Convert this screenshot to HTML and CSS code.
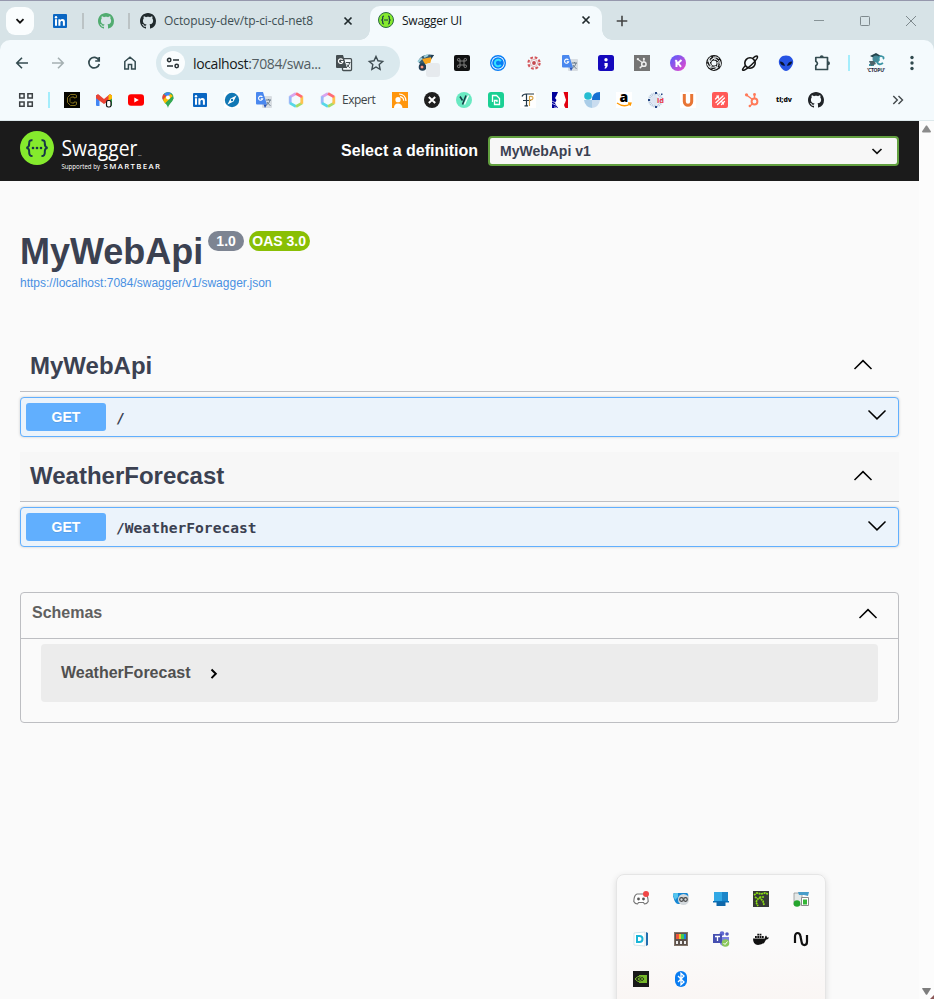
FILE: index.html
```html
<!DOCTYPE html>
<html lang="en">
<head>
<meta charset="utf-8">
<title>Swagger UI</title>
<link rel="stylesheet" href="styles.css">
</head>
<body>
<svg class="defs" aria-hidden="true">
  <symbol id="github" viewBox="0 0 16 16"><path fill="currentColor" d="M8 0C3.58 0 0 3.58 0 8c0 3.54 2.29 6.53 5.47 7.59.4.07.55-.17.55-.38 0-.19-.01-.82-.01-1.49-2.01.37-2.53-.49-2.69-.94-.09-.23-.48-.94-.82-1.13-.28-.15-.68-.52-.01-.53.63-.01 1.08.58 1.23.82.72 1.21 1.87.87 2.33.66.07-.52.28-.87.51-1.07-1.78-.2-3.64-.89-3.64-3.95 0-.87.31-1.59.82-2.15-.08-.2-.36-1.02.08-2.12 0 0 .67-.21 2.2.82.64-.18 1.32-.27 2-.27s1.36.09 2 .27c1.53-1.04 2.2-.82 2.2-.82.44 1.1.16 1.92.08 2.12.51.56.82 1.27.82 2.15 0 3.07-1.87 3.75-3.65 3.95.29.25.54.73.54 1.48 0 1.07-.01 1.93-.01 2.2 0 .21.15.46.55.38A8.01 8.01 0 0 0 16 8c0-4.42-3.58-8-8-8z"/></symbol>
  <symbol id="linkedin" viewBox="0 0 16 16"><rect x="1" y="1" width="14" height="14" rx="1" fill="#0a66c2"/><path fill="#fff" d="M3 6.3h2v6.500H3zM6.4 6.3h1.900v.9c.4-.7 1.100-1.100 2.100-1.100 1.900 0 2.500 1.200 2.500 3v3.700h-2V9.500c0-.9-.2-1.600-1.100-1.600s-1.400.6-1.400 1.600v3.300h-2z"/><circle cx="4" cy="4.200" r="1.200" fill="#fff"/></symbol>
  <symbol id="translate" viewBox="0 0 16 16"><rect x="6" y="4" width="10" height="12" rx="1" fill="#d8dde2"/><path d="M1 0h6l4 12.500H1a1 1 0 0 1-1-1V1a1 1 0 0 1 1-1z" fill="#4a88ef"/><path d="M7.500 12.500H11L9 16z" fill="#2954b8"/><path d="M10 8h5M12.500 7v1M14 8c-.5 2.500-2 4-3.500 5M11 10c1 2 2 2.500 3.500 3.500" stroke="#66798b" fill="none"/><path d="M6.400 5A2.100 2.100 0 1 0 6.700 6.700H4.800" stroke="#fff" fill="none" stroke-width="1.100"/></symbol>
  <symbol id="hexring" viewBox="0 0 16 16"><g fill="none" stroke-width="2.800"><path d="M8 1.500 2 4.900" stroke="#d9a5ee"/><path d="M2.200 4.200v7.500" stroke="#9ab8f8"/><path d="m2 11.100 6 3.400" stroke="#55d8e8"/><path d="m8 14.500 6-3.400" stroke="#a6dc66"/><path d="M13.800 11.800V4.200" stroke="#ffc24f"/><path d="M14 4.900 8 1.500" stroke="#ff6b75"/></g></symbol>
  <symbol id="hubspot" viewBox="0 0 16 16"><g fill="none" stroke="currentColor" stroke-width="1.500"><circle cx="10.500" cy="9.500" r="2.900" stroke-width="2"/><path d="M10.500 6.800V2.500M8.500 7.500 2.500 3M8.700 11.500 6 14"/></g><g fill="currentColor"><circle cx="10.500" cy="2.500" r="1.400"/><circle cx="2.500" cy="2.800" r="1.600"/><circle cx="5.800" cy="14" r="1.200"/></g></symbol>
  <symbol id="close" viewBox="0 0 16 16"><path d="m4.500 4.500 7 7m0-7-7 7" fill="none" stroke="currentColor" stroke-width="1.700"/></symbol>
  <symbol id="arrow-up" viewBox="0 0 20 12"><path d="m1.500 10 8.500-8.400 8.500 8.400" fill="none" stroke="#000" stroke-width="1.500"/></symbol>
  <symbol id="arrow-down" viewBox="0 0 20 12"><path d="m1.500 1.500 8.500 8.400 8.500-8.400" fill="none" stroke="#000" stroke-width="1.500"/></symbol>
</svg>

<header class="browser">
  <div class="tabs">
    <button class="tab-search"><svg class="ic"><path d="m4.500 6.200 3.500 3.500 3.500-3.500" fill="none" stroke="#111" stroke-width="1.800"/></svg></button>
    <svg class="ic pinned"><use href="#linkedin"/></svg>
    <i class="tab-sep"></i>
    <svg class="ic green"><use href="#github"/></svg>
    <i class="tab-sep"></i>
    <div class="tab"><svg class="ic"><use href="#github"/></svg><span class="tab-title repo">Octopusy-dev/tp-ci-cd-net8</span><svg class="ic"><use href="#close"/></svg></div>
    <div class="tab active"><svg class="ic" viewBox="0 0 16 16"><circle cx="8" cy="8" r="7.500" fill="#85ea2d" stroke="#2c6b45"/><path d="M6 4Q4.500 4 4.700 6T3.200 8Q4.900 8 4.700 10T6 12M10 4q1.500 0 1.300 2T12.800 8q-1.700 0-1.500 2T10 12M6 8h4" fill="none" stroke="#173647" stroke-width="1.200"/></svg><span class="tab-title">Swagger UI</span><svg class="ic"><use href="#close"/></svg></div>
    <svg class="ic plus"><path d="M8 2.700v10.600M2.700 8h10.600" stroke="#444" stroke-width="1.600"/></svg>
    <div class="window-controls">
      <svg class="ic"><path d="M3 7.500h10" stroke="#879397"/></svg>
      <svg class="ic"><rect x="3.500" y="3.500" width="9" height="9" rx=".8" fill="none" stroke="#7e898d"/></svg>
      <svg class="ic"><path d="m3 3 10 10M13 3 3 13" stroke="#7e898d"/></svg>
    </div>
  </div>

  <div class="toolbar">
    <svg class="ic"><path d="M14 8H3M8 2.800 2.800 8 8 13.200" fill="none" stroke="#344b50" stroke-width="1.600"/></svg>
    <svg class="ic"><path d="M2 8h11M8 2.800 13.200 8 8 13.200" fill="none" stroke="#a5b0b2" stroke-width="1.600"/></svg>
    <svg class="ic"><path d="M12.800 5A5.300 5.300 0 1 0 13.300 9M13.200 2v4H9.200" fill="none" stroke="#344b50" stroke-width="1.700"/></svg>
    <svg class="ic"><path d="M2.800 14V6.500L8 2.200l5.200 4.300V14H9.600V9.500H6.400V14z" fill="none" stroke="#344b50" stroke-width="1.500"/></svg>
    <div class="omnibox">
      <span class="site-info"><svg class="ic"><g fill="none" stroke="#273034" stroke-width="1.500"><circle cx="4.200" cy="5" r="1.700"/><path d="M8 5h6M2 11h6"/><circle cx="11.700" cy="11" r="1.700"/></g></svg></span>
      <span class="url">localhost<em>:7084/swa...</em></span>
      <svg class="ic"><rect x="6.500" y="3.700" width="9" height="11.800" rx="1" fill="#f4fafd" stroke="#454e51" stroke-width="1.300"/><path d="M1 0h6l4 13H1a1 1 0 0 1-1-1V1a1 1 0 0 1 1-1z" fill="#454e51"/><path d="M6.600 4.800A2.300 2.300 0 1 0 7 6.500H5" stroke="#fff" fill="none" stroke-width="1.200"/><path d="M10 7.500h4.500M13.500 8c-.5 2.500-2 4-3.500 5M11 9.500c1 2 2 2.500 3 3.500" stroke="#454e51" fill="none"/></svg>
      <svg class="ic"><path d="m8 1.500 2 4.300 4.700.6-3.500 3.200.9 4.700L8 12l-4.100 2.300.9-4.700L1.300 6.400l4.700-.6z" fill="none" stroke="#3d4b50" stroke-width="1.400"/></svg>
    </div>
    <div class="extensions">
      <svg class="ic over"><path d="M0 6Q4-2 16 0L10 9H2z" fill="#355a70"/><path d="M4 4 14 2l-2 7H7z" fill="#f7a51e"/><path d="m6 2 4-2M0 7l4-4" stroke="#9ed0db" stroke-width="2"/><path d="M13 0h3l-3 4z" fill="#223d54"/><circle cx="4.500" cy="12" r="3.800" fill="#223d54"/><circle cx="4" cy="12" r="1.600" fill="#ed6344"/><circle cx="4" cy="12" r=".7" fill="#fff"/><rect x="8" y="8" width="14" height="14" rx="3" fill="#e6eaee"/></svg>
      <svg class="ic"><rect width="16" height="16" rx="2" fill="#101112"/><path d="M6 6h4v4H6zM6 6H5a1.300 1.300 0 1 1 1-1zM10 6V5a1.300 1.300 0 1 1 1 1zM6 10v1a1.300 1.300 0 1 1-1-1zM10 10h1a1.300 1.300 0 1 1-1 1z" fill="none" stroke="#888" stroke-width=".9"/></svg>
      <svg class="ic"><circle cx="8" cy="8" r="7.300" fill="#fff" stroke="#087df5" stroke-width="1.400"/><circle cx="8" cy="8" r="5.800" fill="#087df5"/><path d="M10.800 6.200A3.200 3.200 0 1 0 10.800 9.800" fill="none" stroke="#35e0ff" stroke-width="2"/></svg>
      <svg class="ic"><circle cx="8" cy="8" r="5.600" fill="none" stroke="#d3575c" stroke-width="2.200" stroke-dasharray="2.700 1.700"/><circle cx="8" cy="8" r="1.900" fill="#c54a50"/><circle cx="8" cy="8" r="3.600" fill="none" stroke="#dfa0a2" stroke-width=".8"/></svg>
      <svg class="ic"><use href="#translate"/></svg>
      <svg class="ic"><rect width="16" height="16" rx="2.500" fill="#1509bd"/><circle cx="8" cy="4.800" r="1.700" fill="#fff"/><path d="M6.500 8h3.200v3L8 13.500H6.400L7.500 11h-1z" fill="#fff"/></svg>
      <svg class="ic hs-gray"><rect width="16" height="16" fill="#747474"/><use href="#hubspot" x="2" y="2" width="12" height="12"/></svg>
      <svg class="ic"><defs><linearGradient id="kg" x1="0" x2="1" y2="1"><stop stop-color="#515bff"/><stop offset="1" stop-color="#ee4ac8"/></linearGradient></defs><circle cx="8" cy="8" r="8" fill="url(#kg)"/><path d="M5.300 5.200l1.200 1V12M11.500 5 7 9M8 8l3 3.800" stroke="#fff" stroke-width="2" fill="none"/></svg>
      <svg class="ic"><circle cx="8" cy="8" r="7.900" fill="#111"/><g fill="none" stroke="#f4fafd" stroke-width="1"><path id="blade" d="M8 4.200Q12 4 13.500 8.500M7 2.200Q10 1 13 3.500"/><use href="#blade" transform="rotate(72 8 8)"/><use href="#blade" transform="rotate(144 8 8)"/><use href="#blade" transform="rotate(216 8 8)"/><use href="#blade" transform="rotate(288 8 8)"/></g><circle cx="8" cy="8" r="2.600" fill="#f4fafd"/></svg>
      <svg class="ic"><circle cx="8" cy="8" r="5.200" fill="none" stroke="#111" stroke-width="1.600"/><path d="M3.500 10.500C0 14-.5 16 2.500 15 6 13.500 13 7 15 3.500 16.500.500 14.500 0 11 3" fill="none" stroke="#111" stroke-width="1.500"/></svg>
      <svg class="ic"><path d="M8 .5C3 .5.800 4 .8 7c0 4 4.500 9 7.200 9s7.200-5 7.200-9C15.200 4 13 .5 8 .5z" fill="#2653e4"/><path d="M1.800 6.500q4 0 5.300 4.300Q2.800 11 1.800 6.500zM14.200 6.500q-4 0-5.300 4.300 4.300.2 5.300-4.300z" fill="#08132e"/></svg>
      <svg class="ic"><path d="M1.800 2.500h11.700V14.500H1.800v-3.700q3.200-2.300 0-4.600z" fill="none" stroke="#344b50" stroke-width="1.700" stroke-linejoin="round"/><path d="M5.700 2.200a2 2 0 0 1 4 0zM14 6.200a2 2 0 0 1 0 4z" fill="#344b50"/></svg>
      <i class="bar-sep"></i>
      <svg class="ic avatar" viewBox="0 0 18 20"><path d="M3 3 9 0l5 3-5 3z" fill="#24444d"/><circle cx="9" cy="6" r="3.500" fill="#468998"/><path d="M2 12h5m1-4-4 4m6-3q2 4 6 1m-4-2q-2-4 2-5 4 1 2 3" fill="none" stroke="#3a94a4" stroke-width="1.800"/><path d="M2 8h5l2 3-5 2z" fill="#50636a"/><text x="0" y="18.500" font-size="5" font-weight="700" textLength="18" font-family="Open Sans" fill="#223">'CTOPU'</text></svg>
      <svg class="ic"><g fill="#30494e"><circle cx="8" cy="2.500" r="1.700"/><circle cx="8" cy="8" r="1.700"/><circle cx="8" cy="13.500" r="1.700"/></g></svg>
    </div>
  </div>

  <nav class="bookmarks">
    <svg class="ic"><g fill="none" stroke="#3d4144" stroke-width="1.500"><path d="M1.700 1.700h4.400v4.400H1.700zM9.900 1.700h4.400v4.400H9.900zM1.700 9.900h4.400v4.400H1.700zM9.900 9.900h4.400v4.400H9.900z"/></g></svg>
    <i class="bar-sep"></i>
    <svg class="ic"><rect width="16" height="16" fill="#050500"/><path d="M12.500 5.500V3.300L11 2.500H6.500l-3 3v5l3 3H11l1.500-1V10H10v1H7.500L6 9.500v-3L7.500 5H10v1z" fill="none" stroke="#8f7b1d" stroke-width=".9"/></svg>
    <svg class="ic"><path d="M0 3h3.500v11H1q-1 0-1-1z" fill="#4285f4"/><path d="M12.500 3H16v10q0 1-1 1h-2.500z" fill="#34a853"/><path d="M0 3.500 2 2l6 5 6-5 2 1.500v2.700L8 12 0 6.200z" fill="#ea4335"/><path d="m12.500 3.300 1.500-1 2 1.200v3l-3.500 2.200z" fill="#fbbc04"/><rect x="10.500" y="8.500" width="4.500" height="6.500" rx="1.700" fill="#fff" stroke="#111" stroke-width="1.200"/></svg>
    <svg class="ic"><rect y="2.300" width="16" height="11.500" rx="3" fill="#f00"/><path d="m6.300 5.500 4.500 2.500-4.500 2.600z" fill="#fff"/></svg>
    <svg class="ic"><path d="M8 0a5.500 5.500 0 0 0-5.500 5.500C2.500 10 7 11 8 16c1-5 5.500-6 5.500-10.500A5.500 5.500 0 0 0 8 0z" fill="#34a853"/><path d="M3.700 2A5.500 5.500 0 0 0 3 8L7 4.600z" fill="#ea4335"/><path d="m3 8 6-7 4 3-8 7.500z" fill="#fbbc04"/><path d="M9 1q3 .5 4 3L5 11.500l4 1 4.500-6L12 2z" fill="#34a853"/><path d="M4 2q3-3 7-1L7.500 5z" fill="#4285f4"/><circle cx="8" cy="5.500" r="2" fill="#fff"/></svg>
    <svg class="ic"><use href="#linkedin"/></svg>
    <svg class="ic"><rect width="16" height="16" fill="#fff"/><circle cx="8" cy="8" r="7.200" fill="#1278b5"/><path d="M12.500 3.500 9.500 9.500l-6 3 3-6z" fill="#fff"/><circle cx="8" cy="8" r="1.200" fill="#1278b5"/></svg>
    <svg class="ic"><use href="#translate"/></svg>
    <svg class="ic"><use href="#hexring"/></svg>
    <span class="folder"><svg class="ic"><use href="#hexring"/></svg>Expert</span>
    <svg class="ic"><rect width="16" height="16" fill="#ff960d"/><circle cx="6" cy="7.700" r="2.600" fill="#fff"/><path d="M2 16q0-4.500 4-4.500t4.500 4.500z" fill="#fff"/><path d="M7 2q6.500 0 7 7M8 4.700q3.500.5 3.700 4" fill="none" stroke="#fff" stroke-width="1.200"/></svg>
    <svg class="ic"><circle cx="8" cy="8" r="8" fill="#1f1f1f"/><path d="m4.800 5 6.400 6M11.200 5l-6.400 6" stroke="#fff" stroke-width="2"/></svg>
    <svg class="ic"><circle cx="8" cy="8" r="8" fill="#69e9c2"/><path d="m4 4.500 2.500 4M10 3.500 6.500 12.500" stroke="#163d46" stroke-width="1.600"/><path d="M12.500 3.500 8.500 12.500" stroke="#fff" stroke-width="1.300"/></svg>
    <svg class="ic"><rect width="16" height="16" rx="3" fill="#1ad094"/><path d="M4.500 10V3.500h4L11.500 6.500v6H6.500V8.500H9v1.500" fill="none" stroke="#fff" stroke-width="1.300"/></svg>
    <svg class="ic"><rect width="16" height="16" fill="#fff"/><path d="M2 4.500q1-2.500 4-2.500h8M6.500 14V2M3 8.500h8M4.500 13.800h3.500" fill="none" stroke="#233847" stroke-width="1.200"/><path d="M9.500 14V4.500q3.500-.5 3.500 1.500t-3 2" fill="none" stroke="#d7a347" stroke-width="1.100"/></svg>
    <svg class="ic"><path fill="#fff" d="M0 0h16v16H0z"/><path d="M0 0h6L4.500 3.500 3 6l1.500 2L3 11l3 5H0z" fill="#00009b"/><path d="M11.500 0H16v16h-2.500q-2.500-3-.500-5l1-3-1-3z" fill="#e1000f"/><path d="m0 9 4 2M0 11.500l5 2M2 15l3 .5" stroke="#fff" stroke-width=".7"/></svg>
    <svg class="ic"><path d="M0 8h8v8Q1 15 0 8z" fill="#aacde8"/><path d="M8 8h8q-1 7-8 8z" fill="#c9dcef"/><circle cx="4" cy="4" r="3.800" fill="#25bdd1"/><path d="M8 8q0-8 8-8v8z" fill="#1770d2"/></svg>
    <svg class="ic"><rect width="16" height="16" fill="#fff"/><text x="3.500" y="10" font-size="14" font-weight="800" font-family="Open Sans">a</text><path d="M1 11q7 5 13 1M12 11l3 .2-1 2.600" fill="none" stroke="#ff9900" stroke-width="1.300"/></svg>
    <svg class="ic"><circle cx="7.500" cy="8" r="6" fill="none" stroke="#b7c8de" stroke-width="3" stroke-dasharray="1 .7"/><circle cx="7" cy="8" r="4" fill="#dde5f2"/><path d="M0 7h2v2H0zM7 0h2v2H7zM7 14h2v2H7zM13 1.500h1.500V3H13z" fill="#244582"/><text x="9" y="11" font-size="7.500" font-weight="700" font-family="Open Sans" fill="#ed3546">id</text></svg>
    <svg class="ic"><rect width="16" height="16" fill="#fff"/><path d="M4.300 2v7.500a3.700 3.700 0 0 0 7.400 0V2" fill="none" stroke="#e87535" stroke-width="3"/></svg>
    <svg class="ic"><rect width="16" height="16" rx="2" fill="#ff5957"/><g stroke="#fff" stroke-width="1.300" stroke-linecap="round"><path d="m3.500 7 3-3M4 10.500l7-6.500M5.500 12.500l7-6.500M9.500 12.500l3-3M5 4l1.500 2M10 10l1.500 2"/></g></svg>
    <svg class="ic hs-orange"><use href="#hubspot"/></svg>
    <svg class="ic"><text x="0" y="10" font-size="7" font-weight="800" textLength="16" lengthAdjust="spacingAndGlyphs" font-family="Open Sans" fill="#101010">tl;dv</text></svg>
    <svg class="ic dark"><use href="#github"/></svg>
    <svg class="ic more"><path d="m3.300 4 4 4-4 4M8.500 4l4 4-4 4" fill="none" stroke="#42484b" stroke-width="1.400"/></svg>
  </nav>
</header>

<div class="viewport">
  <main>
    <div class="topbar">
      <svg class="logo" viewBox="0 0 142 42">
        <circle cx="17" cy="17" r="17" fill="#85ea2d"/>
        <path d="M12.500 9.200Q9 8.700 9.200 12.200T6.500 17Q9.400 17.200 9.200 21.200T12.500 25M21.500 9.200q3.500-.5 3.300 3t2.700 4.800q-2.900.2-2.700 4.200t-3.300 3.800" fill="none" stroke="#173647" stroke-width="2"/>
        <g fill="#173647"><circle cx="13" cy="17" r="1.300"/><circle cx="17" cy="17" r="1.300"/><circle cx="21" cy="17" r="1.300"/></g>
        <g font-family="Open Sans" fill="#fff"><text x="41.500" y="24.500" font-size="22.500" textLength="80" lengthAdjust="spacingAndGlyphs">Swagger<tspan font-size="2.500" dx="1">TM</tspan></text><text x="41.500" y="37.500" font-size="6.300" textLength="38.500" lengthAdjust="spacingAndGlyphs">Supported by</text><text x="83.500" y="38.300" font-size="7.800" font-weight="600" textLength="56.500" lengthAdjust="spacing">SMARTBEAR</text></g>
      </svg>
      <div class="definition"><label>Select a definition</label><div class="select"><span>MyWebApi v1</span><svg class="ic"><path d="m3.500 6 4.500 4.300L12.500 6" fill="none" stroke="#111" stroke-width="1.700"/></svg></div></div>
    </div>

    <section class="info">
      <h1>MyWebApi</h1><span class="badge">1.0</span><span class="badge oas">OAS 3.0</span>
    </section>
    <a class="spec-link">https://localhost:7084/swagger/v1/swagger.json</a>

    <section class="group">
      <h2>MyWebApi<svg class="arrow"><use href="#arrow-up"/></svg></h2>
      <div class="operation"><b>GET</b><code>/</code><svg class="arrow"><use href="#arrow-down"/></svg></div>
    </section>
    <section class="group hovered">
      <h2>WeatherForecast<svg class="arrow"><use href="#arrow-up"/></svg></h2>
      <div class="operation"><b>GET</b><code>/WeatherForecast</code><svg class="arrow"><use href="#arrow-down"/></svg></div>
    </section>

    <section class="schemas">
      <h3>Schemas<svg class="arrow"><use href="#arrow-up"/></svg></h3>
      <div class="model">WeatherForecast<svg class="ic"><path d="m5.500 4.500 4.300 4.300-4.300 4.300" fill="none" stroke="#000" stroke-width="2"/></svg></div>
    </section>
  </main>
  <aside class="scrollbar">
    <svg viewBox="0 0 15 12"><path d="M3 9.500 7 3.500h1l4 6q0 1-1 1H4q-1 0-1-1z" fill="#8b8b8b"/></svg>
    <svg viewBox="0 0 15 12"><path d="M3 1.500q0-.5 1-.5h7q1 0 1 .5l-4 6.200H7z" fill="#7d7d7d"/><path d="m11 12 4-4v4z" fill="#8c5757"/></svg>
  </aside>
</div>

<div class="tray">
  <svg class="ic"><path d="M4 3h8q3 1 3.200 7.500Q14 13 11.500 13l-1-1.500h-5l-1 1.500Q2 13 .8 10.500 1 4 4 3z" fill="#fff" stroke="#777" stroke-width="1.200"/><circle cx="5.500" cy="8" r="1.400" fill="#555"/><circle cx="10.500" cy="8" r="1.400" fill="#555"/><circle cx="13" cy="3" r="3" fill="#f04747"/></svg>
  <svg class="ic"><path d="M1 2h13q2 1 1 5l-5 6H5Q2 13 0 5q0-3 1-3z" fill="#1687d4"/><path d="M0 4q0-2 2-2h3v4L2 9z" fill="#55c5ee"/><circle cx="10.500" cy="8.500" r="5.500" fill="#d2d8dc"/><g fill="none" stroke="#444" stroke-width="1.200"><circle cx="8.500" cy="8.500" r="1.800"/><circle cx="12.500" cy="8.500" r="1.800"/></g></svg>
  <svg class="ic"><path d="M1 1h14v9H1z" fill="#31a8e5"/><path d="M9 1h6v9H9z" fill="#1b85c9"/><path d="M0 10h16v1.500H0z" fill="#0870b8"/><path d="M3.500 11h9v4h-9z" fill="#1068aa"/></svg>
  <svg class="ic"><rect width="16" height="16" fill="#363a36"/><path d="m1 4 3-2 4 1 4-1 3 1M2 6l3 2-2 3 2 4M11 6 6 6l4 4 1 4" fill="none" stroke="#8bdf12" stroke-width="1.700" stroke-dasharray="2 .6"/></svg>
  <svg class="ic"><path d="M1 2h8v12H1z" fill="#e4e8e7" stroke="#888" stroke-width=".7"/><path d="M5 1h11l-1 4-4-1H6z" fill="#489dc9"/><path d="M8.500 6.500h7v8h-7z" fill="#fff" stroke="#8b8b8b"/><path d="M10 8.500h4v5h-4z" fill="#34b637"/><circle cx="4" cy="12.500" r="3.300" fill="#25a52d"/></svg>
  <svg class="ic"><path d="m1 2 11-1v14L1 14z" fill="#fff" stroke="#bed8e2" stroke-width=".7"/><path d="m13 1 2 1v12l-2 1z" fill="#216cad"/><path d="M4 5h2.500a3 3 0 0 1 0 6H4z" fill="none" stroke="#19b5d7" stroke-width="2"/></svg>
  <svg class="ic"><rect x="1.500" y="1.500" width="13" height="13" fill="#5b514b" stroke="#827569"/><path d="M3 3h3v5H3z" fill="#ef533b"/><path d="M6 3h2v5H6z" fill="#f4c324"/><path d="M8 3h3v5H8z" fill="#42c951"/><path d="M11 3h2v5h-2z" fill="#1583dc"/><path d="M3 10h2v3H3zM7 10h2v3H7zM11 10h2v3h-2z" fill="#eee"/></svg>
  <svg class="ic"><circle cx="9" cy="2.500" r="2.300" fill="#6068d2"/><circle cx="14" cy="3" r="1.800" fill="#5059bd"/><path d="M7 6h9v6q-4 6-9 1z" fill="#7c82e1"/><rect y="3" width="9" height="9" fill="#4650b1"/><path d="M2 5.500h5M4.500 5.500V10" stroke="#fff" stroke-width="1.300"/><circle cx="12.500" cy="12" r="3.800" fill="#8bc75b"/><path d="m10.500 12 1.500 1.500 2.500-3" fill="none" stroke="#fff"/></svg>
  <svg class="ic"><path d="M0 7.500h12q-.5-2 1-3 1 1 1 2h2q-.5 2-3 2.200Q11 14 5 14 0 14 0 7.500zM2 5h1.800v1.900H2zM4.300 5h1.800v1.900H4.300zM6.600 5h1.800v1.900H6.600zM4.300 2.700h1.800v1.800H4.300zM6.600 2.700h1.800v1.800H6.600zM8.900 5h1.800v1.900H8.900z" fill="#111"/></svg>
  <svg class="ic"><path d="M2 12V5.500C2 .8 7 .8 7.500 5.500l1 5c.5 4.700 5.500 4.700 5.500 0V4" fill="none" stroke="#111" stroke-width="2.200"/></svg>
  <svg class="ic"><rect width="16" height="16" fill="#191919"/><path d="M6 4h8v8H6z" fill="#76b82a"/><path d="M2 8q5-6 10 0-5 6-10 0zM5 8q2-3 5 0-3 3-5 0z" fill="#263018" stroke="#76b82a"/></svg>
  <svg class="ic"><rect x="2" width="12" height="16" rx="6" fill="#087cf1"/><path d="m5 5 6 6-3 2.700V2.300L11 5l-6 6" fill="none" stroke="#fff" stroke-width="1.300"/></svg>
</div>
</body>
</html>
```

FILE: styles.css
```css
* { box-sizing: border-box; }
body { margin: 0; width: 934px; height: 999px; overflow: hidden; position: relative; background: #fafafa; font-family: "Liberation Sans", Arial, sans-serif; color: #3b4151; }
h1, h2, h3 { margin: 0; }
.defs { position: absolute; width: 0; height: 0; }
.ic { width: 16px; height: 16px; flex: none; display: block; overflow: visible; }
.dark { color: #202428; }

.browser { height: 121px; background: #d7e3e7; border-top: 1px solid #9698ad; font-family: "Open Sans", "Noto Sans", sans-serif; }
.tabs { height: 39px; display: flex; align-items: center; padding-left: 6px; }
.tab-search { width: 28px; height: 28px; border: 0; border-radius: 9px; background: #fafdfe; padding: 6px; }
.pinned { margin-left: 18px; }
.green { color: #51ac70; }
.tab-sep { width: 2px; height: 16px; background: #bbc3c5; margin: 0 14px; }
.tab-sep + .tab { margin-left: -4px; }
.tab { height: 34px; width: 230px; display: flex; align-items: center; gap: 8px; color: #202a2d; padding-right: 14px; }
.tab-title { flex: 1; font-size: 12px; white-space: nowrap; color: #101719; letter-spacing: -.25px; }
.repo { color: #3d4e53; letter-spacing: -.1px; }
.tab.active { position: relative; width: 232px; padding: 0 8px 6px; background: #f4fafd; border-radius: 10px 10px 0 0; align-self: flex-end; }
.tab.active::before, .tab.active::after { content: ""; position: absolute; bottom: 0; width: 10px; height: 10px; }
.tab.active::before { left: -10px; background: radial-gradient(circle at 0 0, transparent 9.500px, #f4fafd 10px); }
.tab.active::after { right: -10px; background: radial-gradient(circle at 100% 0, transparent 9.500px, #f4fafd 10px); }
.plus { margin-left: 12px; }
.window-controls { margin-left: auto; display: flex; gap: 30px; padding-right: 15px; }

.toolbar { height: 46px; background: #f4fafd; border-radius: 10px 10px 0 0; display: flex; align-items: center; gap: 20px; padding: 0 14px; }
.omnibox { width: 244px; height: 34px; margin-left: -2px; border-radius: 17px; background: #dae9ee; display: flex; align-items: center; padding: 0 16px 0 5px; gap: 16px; }
.site-info { width: 24px; height: 24px; border-radius: 50%; background: #fafdfe; padding: 4px; margin-right: -8px; flex: none; }
.url { width: 127px; font-size: 14px; color: #15191b; white-space: nowrap; letter-spacing: -.38px; }
.url em { font-style: normal; color: #535d62; }
.extensions { display: flex; align-items: center; gap: 20px; margin-left: -2px; }
.bar-sep { width: 2px; height: 16px; background: #a4edfc; }
.extensions .bar-sep { margin: 0 -2px; }
.avatar { width: 18px; height: 20px; margin: 0 -1px; }
.hs-gray { color: #eee; }
.hs-orange { color: #ff7a59; }
.bookmarks { height: 35px; background: #f4fafd; border-bottom: 1px solid #dce8eb; display: flex; align-items: flex-start; gap: 16px; padding: 6px 28px 0 18px; }
.bookmarks .bar-sep { margin: 0 -2px; }
.folder { display: flex; gap: 6px; width: 56px; font-size: 12px; line-height: 16px; color: #3d4548; letter-spacing: -.5px; }
.more { margin-left: auto; }

.viewport { height: 878px; display: flex; }
main { width: 919px; }
.scrollbar { width: 15px; background: #fcfcfc; display: flex; flex-direction: column; justify-content: space-between; padding-top: 1px; }
.scrollbar svg { width: 15px; height: 12px; display: block; }
.topbar { height: 60px; background: #1b1b1b; display: flex; justify-content: space-between; padding: 10px 20px; }
.logo { width: 142px; height: 42px; }
.definition { display: flex; align-items: center; gap: 10px; height: 40px; }
.definition label { font-size: 16px; font-weight: 700; color: #fff; }
.select { width: 411px; height: 30px; border: 2px solid #62a03f; border-radius: 4px; background: #f7f7f7; display: flex; align-items: center; justify-content: space-between; padding: 0 12px 0 10px; font-size: 14px; font-weight: 700; }
.info { display: flex; height: 41px; margin: 50px 20px 0; align-items: flex-start; }
.info h1 { font-size: 36px; line-height: 41px; }
.badge { height: 20px; margin-left: 5px; padding: 0 8px; border-radius: 10px; background: #7d8492; color: #fff; font-size: 14px; line-height: 20px; font-weight: 700; }
.oas { background: #89bf04; padding: 0 3.500px; }
.spec-link { display: block; margin: 4px 20px 0; font-size: 12px; line-height: 14px; color: #4990e2; }
.group { margin: 52px 20px 0; }
.group h2 { display: flex; justify-content: space-between; align-items: center; height: 50px; padding: 0 26px 2px 10px; font-size: 24px; border-bottom: 1px solid #bebfc3; }
.group h2 .arrow { margin-top: -1px; }
.group + .group { margin-top: 15px; }
.hovered h2 { background: #f7f7f7; }
.group.hovered h2 .arrow { margin-top: 1px; }
.arrow { width: 20px; height: 12px; display: block; }
.operation { height: 40px; margin-top: 5px; border: 1px solid #61affe; border-radius: 4px; background: #ebf3fb; box-shadow: 0 0 3px rgba(0,0,0,.19); display: flex; align-items: center; padding: 0 11px 0 5px; }
.operation b { width: 80px; height: 28px; border-radius: 3px; background: #61affe; color: #fff; text-align: center; font-size: 14px; line-height: 28px; text-shadow: 0 1px rgba(0,0,0,.1); }
.operation code { margin-left: 10px; font: 700 14.600px "DejaVu Sans Mono", monospace; }
.operation .arrow { margin: -5px 0 0 auto; }
.hovered .operation .arrow { margin-top: -3px; }
.schemas { margin: 45px 20px 0; height: 131px; border: 1px solid #bdbec2; border-radius: 4px; color: #606060; }
.schemas h3 { height: 46px; border-bottom: 1px solid #bdbec2; display: flex; justify-content: space-between; padding: 10px 20px 0 11px; font-size: 16px; line-height: 19px; }
.schemas h3 .arrow { margin-top: 5px; }
.model { height: 58px; margin: 5px 20px 0; padding: 19px 20px; display: flex; gap: 15px; border-radius: 4px; background: #ececec; color: #505050; font-size: 16px; line-height: 19px; font-weight: 700; }
.model .ic { margin-top: 2px; }

.tray { position: absolute; left: 616px; top: 874px; width: 210px; height: 140px; padding: 16px; display: grid; grid-template-columns: repeat(5, 16px); grid-auto-rows: 16px; gap: 24px; border: 1px solid #e5e5e5; border-radius: 8px; background: linear-gradient(#fafafa 50%, #faf5f3); box-shadow: 0 2px 6px rgba(0,0,0,.12); }
```
